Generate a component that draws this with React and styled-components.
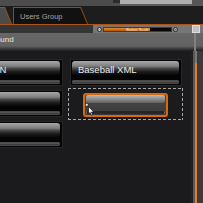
import React from 'react';
import styled, { createGlobalStyle } from 'styled-components';

const GlobalStyle = createGlobalStyle`
  html, body {
    margin: 0;
    padding: 0;
    background: #1b1b1d;
    font-family: "Liberation Sans", Arial, sans-serif;
  }
`;

const Screen = styled.div`
  width: 203px;
  height: 203px;
  overflow: hidden;
  display: flex;
  flex-direction: column;
  background: #1b1b1d;
`;

const TopStrip = styled.div`
  height: 6px;
  display: flex;
  flex-shrink: 0;
`;

const StripPart = styled.div`
  width: ${(p) => (p.$w ? `${p.$w}px` : 'auto')};
  flex: ${(p) => (p.$w ? '0 0 auto' : '1')};
  background: ${(p) => p.$bg};
`;

const TabBar = styled.div`
  height: 18px;
  flex-shrink: 0;
  background: #1d1d1d;
  display: flex;
  align-items: flex-end;
  gap: 1px;
`;

const TabOuter = styled.div`
  height: 17px;
  width: ${(p) => p.$w}px;
  margin-left: ${(p) => p.$offset || 0}px;
  box-sizing: border-box;
  padding: 1px 1px 0 1px;
  display: flex;
  background: ${(p) => (p.$active ? '#8e4a1c' : '#9a5220')};
  clip-path: polygon(0 0, calc(100% - 7px) 0, 100% 100%, 0 100%);
`;

const TabInner = styled.div`
  flex: 1;
  display: flex;
  align-items: center;
  padding-left: 6px;
  background: ${(p) => (p.$active ? '#111112' : '#4b4b4b')};
  clip-path: polygon(0 0, calc(100% - 6.7px) 0, 100% 100%, 0 100%);
  color: #a3a3a3;
  font-size: 7.5px;
  white-space: nowrap;
`;

const Toolbar = styled.div`
  height: 8px;
  flex-shrink: 0;
  border-top: 1px solid #a9541c;
  display: flex;
`;

const ToolLeft = styled.div`
  width: 93px;
  background: #353535;
`;

const ZoomArea = styled.div`
  flex: 1;
  background: #767676;
  display: flex;
  align-items: center;
  gap: 1px;
  padding: 0 3px 0 4px;
`;

const RoundBtn = styled.div`
  width: 5px;
  height: 5px;
  box-sizing: border-box;
  border-radius: 50%;
  background: #dcdcdc;
  border: 1px solid #262626;
  font-size: 5px;
  line-height: 3px;
  color: #222;
  display: grid;
  place-items: center;
`;

const Track = styled.div`
  width: 69px;
  height: 5px;
  box-sizing: border-box;
  background: #070707;
  border: 1px solid #3c3c3c;
  display: grid;
`;

const TrackFill = styled.div`
  grid-area: 1 / 1;
  background: linear-gradient(#e48b2c, #b9570c);
`;

const TrackLabel = styled.div`
  grid-area: 1 / 1;
  font-size: 4px;
  line-height: 3px;
  color: #f4f4f4;
  text-align: center;
  white-space: nowrap;
`;

const Spacer = styled.div`
  flex: 1;
`;

const SquareBtn = styled.div`
  width: 8px;
  height: 8px;
  box-sizing: border-box;
  background: #c2c2c2;
  border: 1px solid #dedede;
`;

const Panel = styled.div`
  height: 18px;
  flex-shrink: 0;
  display: flex;
  background: linear-gradient(#676767 0%, #626262 72%, #3a3a3a 88%, #1e1e1e 100%);
`;

const PanelTitle = styled.div`
  flex: 1;
  margin: 2px 0 0 -29px;
  font-size: 8px;
  line-height: 9px;
  color: #e9e9e9;
  white-space: nowrap;
`;

const PanelStrip = styled.div`
  width: 2px;
  margin-right: 7px;
  background: #808080;
`;

const Content = styled.div`
  flex: 1;
  min-height: 0;
  display: flex;
`;

const Columns = styled.div`
  flex: 1;
  display: flex;
  gap: 7px;
  padding-top: 8px;
  margin-left: -27px;
`;

const Column = styled.div`
  width: ${(p) => p.$w}px;
  flex-shrink: 0;
  display: flex;
  flex-direction: column;
  gap: ${(p) => p.$gap}px;
`;

const Card = styled.div`
  height: 27px;
  box-sizing: border-box;
  border: 1px solid #262626;
  background: #040404;
  padding: 1px 2px 1px 1px;
  display: flex;
  flex-direction: column;
`;

const CardButton = styled.div`
  height: 14px;
  box-sizing: border-box;
  border-radius: 3px;
  padding: 3px 0 0 6px;
  line-height: 11px;
  font-size: 9.5px;
  color: #ececec;
  white-space: nowrap;
  overflow: hidden;
  background: linear-gradient(#a9a9a9 0%, #7c7c7c 38%, #4a4a4a 52%, #1c1c1c 76%, #090909 100%);
`;

const CardBar = styled.div`
  margin-top: auto;
  height: 4px;
  box-sizing: border-box;
  border: 1px solid #4a4a4a;
  border-radius: 1px;
  background: linear-gradient(#606060, #2e2e2e);
`;

const dashH = 'repeating-linear-gradient(90deg, #a6a6a6 0 3px, transparent 3px 5px)';
const dashV = 'repeating-linear-gradient(180deg, #a6a6a6 0 3px, transparent 3px 5px)';

const DropZone = styled.div`
  width: 115px;
  height: 32px;
  margin-left: -2px;
  box-sizing: border-box;
  padding: 5px 15px 3px 15px;
  display: flex;
  background:
    ${dashH} top left / 100% 1px no-repeat,
    ${dashH} bottom left / 100% 1px no-repeat,
    ${dashV} top left / 1px 100% no-repeat,
    ${dashV} top right / 1px 100% no-repeat;
`;

const Ghost = styled.div`
  flex: 1;
  position: relative;
  box-sizing: border-box;
  border: 2px solid #d8690e;
  border-radius: 3px;
  background: linear-gradient(#4a4a4a, #3a3a3a);
  padding: 0 1px 1px;
  display: flex;
  flex-direction: column;
`;

const GhostTop = styled.div`
  height: 8px;
  border-radius: 2px;
  background: linear-gradient(#bababa, #8a8a8a 55%, #606060);
`;

const GhostBar = styled.div`
  margin-top: auto;
  height: 3px;
  border-radius: 1px;
  background: #262626;
  border-right: 1px solid #6a6a6a;
  border-left: 1px solid #6a6a6a;
`;

const Cursor = styled.svg`
  position: absolute;
  left: 0;
  top: 8px;
`;

const Scroll = styled.div`
  width: 13px;
  flex-shrink: 0;
  display: flex;
`;

const ScrollPart = styled.div`
  width: ${(p) => p.$w}px;
  background: ${(p) => p.$bg};
`;

function GrabCursor() {
  return (
    <Cursor width="10" height="13" viewBox="0 0 10 13">
      <rect x="0.5" y="0.5" width="2.5" height="2.5" fill="#f0f0f0" stroke="#222" strokeWidth="0.5" />
      <path
        d="M3.5 3.5 L3.5 11 L5.2 9.4 L6.5 12.3 L7.7 11.8 L6.5 9 L8.8 9 Z"
        fill="#ffffff"
        stroke="#111"
        strokeWidth="0.7"
        strokeLinejoin="round"
      />
    </Cursor>
  );
}

function ItemCard({ label }) {
  return (
    <Card>
      <CardButton>{label}</CardButton>
      <CardBar />
    </Card>
  );
}

export default function App() {
  return (
    <>
      <GlobalStyle />
      <Screen>
        <TopStrip>
          <StripPart $w={113} $bg="#4c4c4c" />
          <StripPart $w={7} $bg="linear-gradient(#2c2c2c 0 50%, #4c4c4c 50%)" />
          <StripPart $w={72} $bg="linear-gradient(#b0b0b0 0 60%, #5e5e5e 60%)" />
          <StripPart $bg="#565656" />
        </TopStrip>

        <TabBar>
          <TabOuter $w={14} $offset={-2}>
            <TabInner />
          </TabOuter>
          <TabOuter $w={75} $active>
            <TabInner $active>Users Group</TabInner>
          </TabOuter>
        </TabBar>

        <Toolbar>
          <ToolLeft />
          <ZoomArea>
            <RoundBtn>−</RoundBtn>
            <Track>
              <TrackFill style={{ width: '68%' }} />
              <TrackLabel>Button Scale</TrackLabel>
            </Track>
            <RoundBtn>+</RoundBtn>
            <Spacer />
            <SquareBtn />
          </ZoomArea>
        </Toolbar>

        <Panel>
          <PanelTitle>Background</PanelTitle>
          <PanelStrip />
        </Panel>

        <Content>
          <Columns>
            <Column $w={90} $gap={4}>
              <ItemCard label="JSON" />
              <ItemCard label="" />
              <ItemCard label="" />
            </Column>
            <Column $w={112} $gap={2}>
              <ItemCard label="Baseball XML" />
              <DropZone>
                <Ghost>
                  <GhostTop />
                  <GhostBar />
                  <GrabCursor />
                </Ghost>
              </DropZone>
            </Column>
          </Columns>
          <Scroll>
            <ScrollPart $w={3} $bg="#1f1f1f" />
            <ScrollPart $w={2} $bg="#585858" />
            <ScrollPart $w={2} $bg="linear-gradient(#777 0 12px, #e87d0d 12px)" />
            <ScrollPart $w={6} $bg="#3b3b3b" />
          </Scroll>
        </Content>
      </Screen>
    </>
  );
}
